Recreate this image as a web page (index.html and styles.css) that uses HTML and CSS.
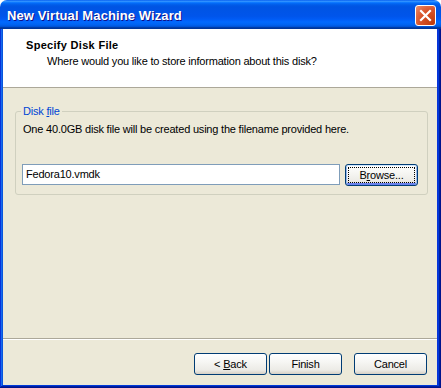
FILE: index.html
```html
<!DOCTYPE html>
<html>
<head>
<meta charset="utf-8">
<link rel="stylesheet" href="styles.css">
</head>
<body>
<div class="window">
  <div class="titlebar">
    <span class="title">New Virtual Machine Wizard</span>
    <span class="close">
      <svg width="13" height="13" viewBox="0 0 13 13"><path d="M2 2 L11 11 M11 2 L2 11" stroke="#fff" stroke-width="2.2" stroke-linecap="square"/></svg>
    </span>
  </div>
  <div class="frame">
    <div class="dialog">
      <div class="header">
        <div class="h-title">Specify Disk File</div>
        <div class="h-sub">Where would you like to store information about this disk?</div>
      </div>
      <div class="content">
        <fieldset class="group">
          <legend class="legend">Disk <u>f</u>ile</legend>
          <p class="desc">One 40.0GB disk file will be created using the filename provided here.</p>
          <div class="file-row">
            <div class="input">Fedora10.vmdk</div>
            <div class="btn btn-focus"><span class="focus-rect">B<u>r</u>owse...</span></div>
          </div>
        </fieldset>
      </div>
      <div class="footer">
        <div class="btn"><span>&lt; <u>B</u>ack</span></div>
        <div class="btn btn-finish">Finish</div>
        <div class="btn">Cancel</div>
      </div>
    </div>
  </div>
</div>
</body>
</html>
```
FILE: styles.css
```css
html, body {
  margin: 0;
  padding: 0;
  background: #ffffff;
}
body {
  font-family: "Liberation Sans", Arial, sans-serif;
  font-size: 11px;
  letter-spacing: -0.2px;
  color: #000;
}
.window {
  width: 441px;
  height: 388px;
  display: flex;
  flex-direction: column;
}
.titlebar {
  height: 29px;
  flex: none;
  display: flex;
  align-items: flex-start;
  justify-content: space-between;
  padding: 0 5px 0 7px;
  box-sizing: border-box;
  border-radius: 7px 7px 0 0;
  background: linear-gradient(to bottom, #0058ee 0%, #3593ff 4%, #288eff 6%, #127dff 8%, #036ffc 10%, #0262ee 14%, #0057e5 20%, #0054e3 24%, #0055eb 56%, #005bf5 66%, #026afe 76%, #0062ef 86%, #0052d6 92%, #0040ab 94%, #003092 100%);
}
.title {
  color: #fff;
  font-weight: bold;
  font-size: 13px;
  line-height: 15px;
  padding-top: 8px;
  text-shadow: 1px 1px #0f1089;
  letter-spacing: 0.1px;
}
.close {
  margin-top: 5px;
  width: 21px;
  height: 21px;
  box-sizing: border-box;
  border: 1px solid #fff;
  border-radius: 3px;
  background: radial-gradient(circle at 90% 90%, #c13b0a 0%, #d8532a 55%, #e06b45 75%, #eb9172 100%);
  display: flex;
  align-items: center;
  justify-content: center;
}
.frame {
  flex: 1;
  display: flex;
  padding: 0 4px 3px 3px;
  background: #0831d9;
  box-shadow: inset -1px -1px #00138c, inset 1px 0 #0831d9, inset -2px -2px #001ea0, inset 2px 0 #166aee, inset -3px -3px #003bda, inset 3px 0 #0855dd;
}
.dialog {
  flex: 1;
  display: flex;
  flex-direction: column;
  background: #ece9d8;
}
.header {
  flex: none;
  background: #fff;
  border-bottom: 1px solid #aca899;
  padding: 10px 0 0 23px;
  height: 48px;
}
.h-title {
  font-weight: bold;
  line-height: 13px;
  letter-spacing: 0.3px;
}
.h-sub {
  line-height: 13px;
  margin-top: 3px;
  padding-left: 21px;
}
.content {
  flex: 1;
  padding: 17px 9px 0 12px;
}
.group {
  margin: 0;
  border: 1px solid #d0d0bf;
  border-radius: 3px;
  padding: 0 7px 8px 7px;
}
.legend {
  color: #0046d5;
  padding: 0 2px;
  margin-left: -2px;
  line-height: 13px;
}
.desc {
  margin: 5px 0 0 0;
  line-height: 13px;
}
.file-row {
  display: flex;
  align-items: flex-start;
  gap: 5px;
  margin-top: 28px;
}
.input {
  margin-left: -1px;
  width: 318px;
  height: 21px;
  box-sizing: border-box;
  border: 1px solid #7f9db9;
  background: #fff;
  padding-left: 3px;
  line-height: 19px;
}
.btn {
  width: 73px;
  height: 22px;
  box-sizing: border-box;
  border: 1px solid #003c74;
  border-radius: 3px;
  background: linear-gradient(to bottom, #ffffff 0%, #f6f6f3 40%, #ecebe6 80%, #d6d0c5 100%);
  display: flex;
  align-items: center;
  justify-content: center;
  line-height: 13px;
}
.btn-focus {
  box-shadow: inset 0 1px #cee7ff, inset 1px 0 #98b8ea, inset -1px 0 #98b8ea, inset 0 -2px #6982ee;
  padding: 2px;
}
.focus-rect {
  flex: 1;
  align-self: stretch;
  display: flex;
  align-items: center;
  justify-content: center;
  outline: 1px dotted #000;
  outline-offset: -1px;
}
.footer {
  flex: none;
  border-top: 1px solid #aca899;
  box-shadow: inset 0 1px #fff;
  padding: 14px 10px 10px 0;
  display: flex;
  justify-content: flex-end;
  gap: 2px;
}
.btn-finish {
  margin-right: 10px;
}
u {
  text-decoration: underline;
  text-underline-offset: 1px;
}
```
